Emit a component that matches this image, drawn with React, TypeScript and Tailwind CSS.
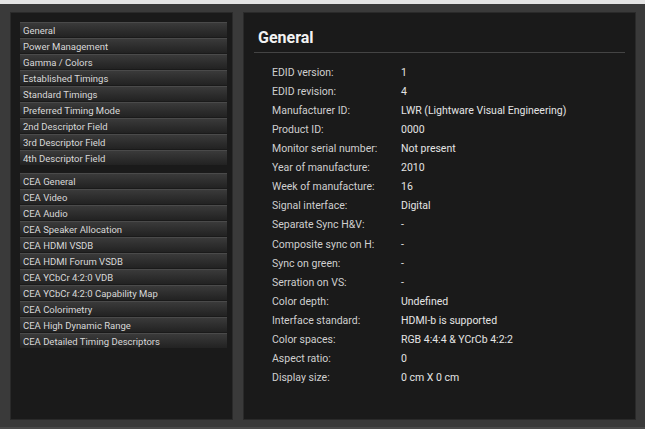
import React from "react";

const group1 = [
  "General",
  "Power Management",
  "Gamma / Colors",
  "Established Timings",
  "Standard Timings",
  "Preferred Timing Mode",
  "2nd Descriptor Field",
  "3rd Descriptor Field",
  "4th Descriptor Field",
];
const group2 = [
  "CEA General",
  "CEA Video",
  "CEA Audio",
  "CEA Speaker Allocation",
  "CEA HDMI VSDB",
  "CEA HDMI Forum VSDB",
  "CEA YCbCr 4:2:0 VDB",
  "CEA YCbCr 4:2:0 Capability Map",
  "CEA Colorimetry",
  "CEA High Dynamic Range",
  "CEA Detailed Timing Descriptors",
];

const rows: [string, string][] = [
  ["EDID version:", "1"],
  ["EDID revision:", "4"],
  ["Manufacturer ID:", "LWR (Lightware Visual Engineering)"],
  ["Product ID:", "0000"],
  ["Monitor serial number:", "Not present"],
  ["Year of manufacture:", "2010"],
  ["Week of manufacture:", "16"],
  ["Signal interface:", "Digital"],
  ["Separate Sync H&V:", "-"],
  ["Composite sync on H:", "-"],
  ["Sync on green:", "-"],
  ["Serration on VS:", "-"],
  ["Color depth:", "Undefined"],
  ["Interface standard:", "HDMI-b is supported"],
  ["Color spaces:", "RGB 4:4:4 & YCrCb 4:2:2"],
  ["Aspect ratio:", "0"],
  ["Display size:", "0 cm X 0 cm"],
];

function Item({ label }: { label: string }) {
  return (
    <div className="h-[15px] mb-[1px] pl-[3px] text-[9.5px] leading-[15px] text-[#d8d8d8] bg-gradient-to-b from-[#3a3a3a] to-[#222] border-t border-[#4a4a4a] whitespace-nowrap">
      {label}
    </div>
  );
}

export default function App() {
  return (
    <div
      className="w-[645px] h-[429px] bg-[#3a3a3a] flex flex-col overflow-hidden"
      style={{ fontFamily: "Roboto, 'Liberation Sans', sans-serif" }}
    >
      <div className="h-[4px] bg-[#e4e4e4] shrink-0" />
      <div className="flex-1 min-h-0 flex gap-[10px] pt-[8px] pl-[10px] pr-[9px] pb-[7px]">
        <div className="w-[223px] h-full bg-[#1a1a1a] border border-[#2a2a2a] pt-[9px] pl-[9px] pr-[5px]">
          {group1.map((l) => (
            <Item key={l} label={l} />
          ))}
          <div className="h-[7px]" />
          {group2.map((l) => (
            <Item key={l} label={l} />
          ))}
        </div>
        <div className="flex-1 h-full bg-[#1a1a1a] border border-[#2a2a2a] pt-[14px] pl-[10px] pr-[10px]">
          <div className="pl-[4px] text-[16px] font-bold text-[#f2f2f2] leading-[22px] pb-[3px] border-b border-[#444]">
            General
          </div>
          <div className="pt-[10px] pl-[18px]">
            {rows.map(([k, v]) => (
              <div key={k} className="flex h-[19.1px] items-center text-[10.5px] whitespace-nowrap">
                <div className="w-[129px] text-[#cfcfcf]">{k}</div>
                <div className="text-[#e4e4e4]">{v}</div>
              </div>
            ))}
          </div>
        </div>
      </div>
      <div className="h-[2px] bg-[#4a4a4a] shrink-0" />
    </div>
  );
}
